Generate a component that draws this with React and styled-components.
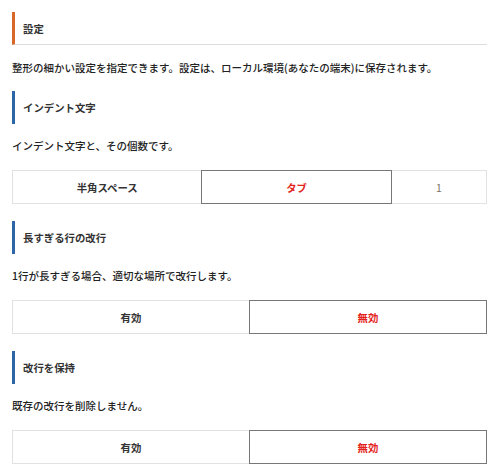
import React from 'react';
import styled, { createGlobalStyle } from 'styled-components';

const GlobalStyle = createGlobalStyle`
  body {
    margin: 0;
    background: #fff;
    font-family: "Noto Sans CJK JP", "Noto Sans", sans-serif;
    color: #333;
  }
`;

const Page = styled.div`
  width: 475px;
  padding: 12px 0 0 12px;
`;

const Heading = styled.h2`
  margin: 0;
  height: 33px;
  box-sizing: border-box;
  display: flex;
  align-items: center;
  padding-left: 8px;
  border-left: 3px solid ${(p) => p.$accent};
  border-bottom: ${(p) => (p.$underline ? '1px solid #ddd' : 'none')};
  font-size: 10.4px;
  font-weight: 700;
  color: #333;
`;

const Text = styled.p`
  margin: ${(p) => (p.$intro ? '15px 0 15px' : '14px 0 16px')};
  font-size: 10.5px;
  line-height: 16px;
  font-weight: 500;
  color: #222;
`;

const Section = styled.section`
  margin-bottom: 17px;
`;

const Options = styled.div`
  display: flex;
  height: 34px;
`;

const Option = styled.button`
  flex: ${(p) => p.$grow || 1};
  position: relative;
  z-index: ${(p) => (p.$active ? 1 : 0)};
  margin: 0 0 0 -1px;
  &:first-child {
    margin-left: 0;
  }
  padding: 0;
  background: #fff;
  border: 1px solid ${(p) => (p.$active ? '#777' : '#e2e2e2')};
  font-family: inherit;
  font-size: 10.4px;
  font-weight: ${(p) => (p.$plain ? 400 : 700)};
  color: ${(p) => (p.$active ? '#e3231b' : p.$plain ? '#7a7466' : '#333')};
  cursor: pointer;
`;

const orange = '#d8682a';
const blue = '#2c66a6';

const Toggle = ({ value }) => (
  <Options>
    <Option $active={value}>有効</Option>
    <Option $active={!value}>無効</Option>
  </Options>
);

const App = () => (
  <>
    <GlobalStyle />
    <Page>
      <Heading $accent={orange} $underline>
        設定
      </Heading>
      <Text $intro>
        整形の細かい設定を指定できます。設定は、ローカル環境(あなたの端末)に保存されます。
      </Text>

      <Section>
        <Heading $accent={blue}>インデント文字</Heading>
        <Text>インデント文字と、その個数です。</Text>
        <Options>
          <Option $grow={2}>半角スペース</Option>
          <Option $grow={2} $active>
            タブ
          </Option>
          <Option $grow={1} $plain>
            1
          </Option>
        </Options>
      </Section>

      <Section>
        <Heading $accent={blue}>長すぎる行の改行</Heading>
        <Text>1行が長すぎる場合、適切な場所で改行します。</Text>
        <Toggle value={false} />
      </Section>

      <Section>
        <Heading $accent={blue}>改行を保持</Heading>
        <Text>既存の改行を削除しません。</Text>
        <Toggle value={false} />
      </Section>
    </Page>
  </>
);

export default App;
